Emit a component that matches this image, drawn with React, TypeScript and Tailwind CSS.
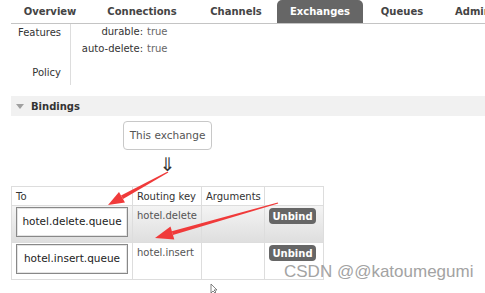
const TABS = [
  { label: "Overview", w: "w-[78px] justify-center" },
  { label: "Connections", w: "w-[106px] justify-center" },
  { label: "Channels", w: "w-[82px] justify-center" },
  { label: "Exchanges", w: "w-[86px] justify-center", active: true },
  { label: "Queues", w: "w-[78px] justify-center" },
  { label: "Admin", w: "w-[80px] pl-[14px]" },
];

const BINDINGS = [
  { queue: "hotel.delete.queue", key: "hotel.delete", alt: true },
  { queue: "hotel.insert.queue", key: "hotel.insert", alt: false },
];

function Arrows() {
  return (
    <svg className="pointer-events-none absolute left-0 top-0" width="485" height="293">
      {/* arrow from ⇓ to first queue */}
      <polygon points="168.3,172.5 167.7,171.5 121,195.5 123,199" fill="#f03a3a" />
      <polygon points="108,205 119,192 125,202.6" fill="#f03a3a" />
      {/* arrow from Unbind to second row */}
      <polygon points="278.2,203.5 277.8,202.5 171.8,231.2 172.9,235" fill="#f03a3a" />
      <polygon points="155,238 170.5,226.5 174.3,239.5" fill="#f03a3a" />
      {/* mouse cursor */}
      <path d="M211 284 L211 293 L213 291 L215 293 L216 292 L214 290 L217 290 Z" fill="#fff" stroke="#666" strokeWidth="0.8" />
    </svg>
  );
}

export default function App() {
  return (
    <div className="relative h-[293px] w-[485px] overflow-hidden bg-white font-['DejaVu_Sans',Verdana,sans-serif] text-[#333]">
      <nav className="ml-[11px] flex h-[24px] border-b border-[#c4c4c4] text-[10px] font-bold">
        {TABS.map((t) => (
          <div
            key={t.label}
            className={
              t.active
                ? `${t.w} flex shrink-0 items-center rounded-t-[5px] bg-[#666] text-white`
                : `${t.w} flex shrink-0 items-center text-[#444]`
            }
          >
            {t.label}
          </div>
        ))}
      </nav>

      <div className="flex text-[10px]">
        <div className="h-[41px] w-[71px] border-r border-[#ddd] pr-[9px] pt-[1px] text-right">Features</div>
        <div className="grid grid-cols-[72px_auto] content-start gap-y-[3px] pt-[1px] leading-[14px]">
          <span className="text-right">durable:</span>
          <span className="pl-[4px] text-[#666]">true</span>
          <span className="text-right">auto-delete:</span>
          <span className="pl-[4px] text-[#666]">true</span>
        </div>
      </div>
      <div className="flex text-[10px]">
        <div className="h-[20px] w-[71px] border-r border-[#ddd] pr-[9px] text-right">Policy</div>
      </div>

      <div className="ml-[11px] mt-[11px] flex h-[20px] items-center bg-[#f1f1f1] pl-[5px]">
        <span className="h-0 w-0 border-x-[4.5px] border-t-[5px] border-x-transparent border-t-[#a0a0a0]" />
        <span className="ml-[7px] text-[10px] font-bold text-[#333]">Bindings</span>
      </div>

      <div className="ml-[123px] mt-[5px] flex h-[29px] w-[89px] items-center justify-center rounded-[4px] border border-[#c8c8c8] text-[10.5px] text-[#555]">
        This exchange
      </div>
      <div className="ml-[123px] mt-[4px] h-[20px] w-[89px] text-center text-[19px] leading-[20px] text-[#333]">⇓</div>

      <table className="ml-[11px] mt-[12px] w-[313px] border-collapse text-[10px]">
        <thead>
          <tr className="h-[19px] text-left font-normal text-[#333]">
            <th className="w-[121px] border border-[#ddd] pl-[4px] font-normal">To</th>
            <th className="w-[69px] border border-[#ddd] pl-[4px] font-normal">Routing key</th>
            <th className="w-[63px] border border-[#ddd] pl-[4px] font-normal">Arguments</th>
            <th className="border border-[#ddd]" />
          </tr>
        </thead>
        <tbody>
          {BINDINGS.map((b) => (
            <tr
              key={b.queue}
              className={b.alt ? "h-[37px] bg-gradient-to-b from-[#f4f4f4] to-[#dedede]" : "h-[37px] bg-white"}
            >
              <td className="border border-[#ddd] px-[4px] align-top">
                <div className="mt-[1px] flex h-[30px] w-[112px] items-center justify-center border border-[#888] bg-white text-[10.5px] text-[#222] shadow-[inset_0_0_0_1px_#e4e4e4]">
                  {b.queue}
                </div>
              </td>
              <td className="border border-[#ddd] pl-[4px] pt-[2px] align-top text-[#555]">{b.key}</td>
              <td className="border border-[#ddd]" />
              <td className="border border-[#ddd] pl-[4px] pt-[2px] align-top">
                <span className="flex h-[16px] w-[47px] items-center justify-center rounded-[4px] bg-[#666] text-[10px] font-bold text-white">
                  Unbind
                </span>
              </td>
            </tr>
          ))}
        </tbody>
      </table>

      <div className="absolute left-[284px] top-[260px] font-['Liberation_Sans',Arial,sans-serif] text-[17px] leading-[24px] text-[#a3a3a3]">
        CSDN @@katoumegumi
      </div>

      <Arrows />
    </div>
  );
}
